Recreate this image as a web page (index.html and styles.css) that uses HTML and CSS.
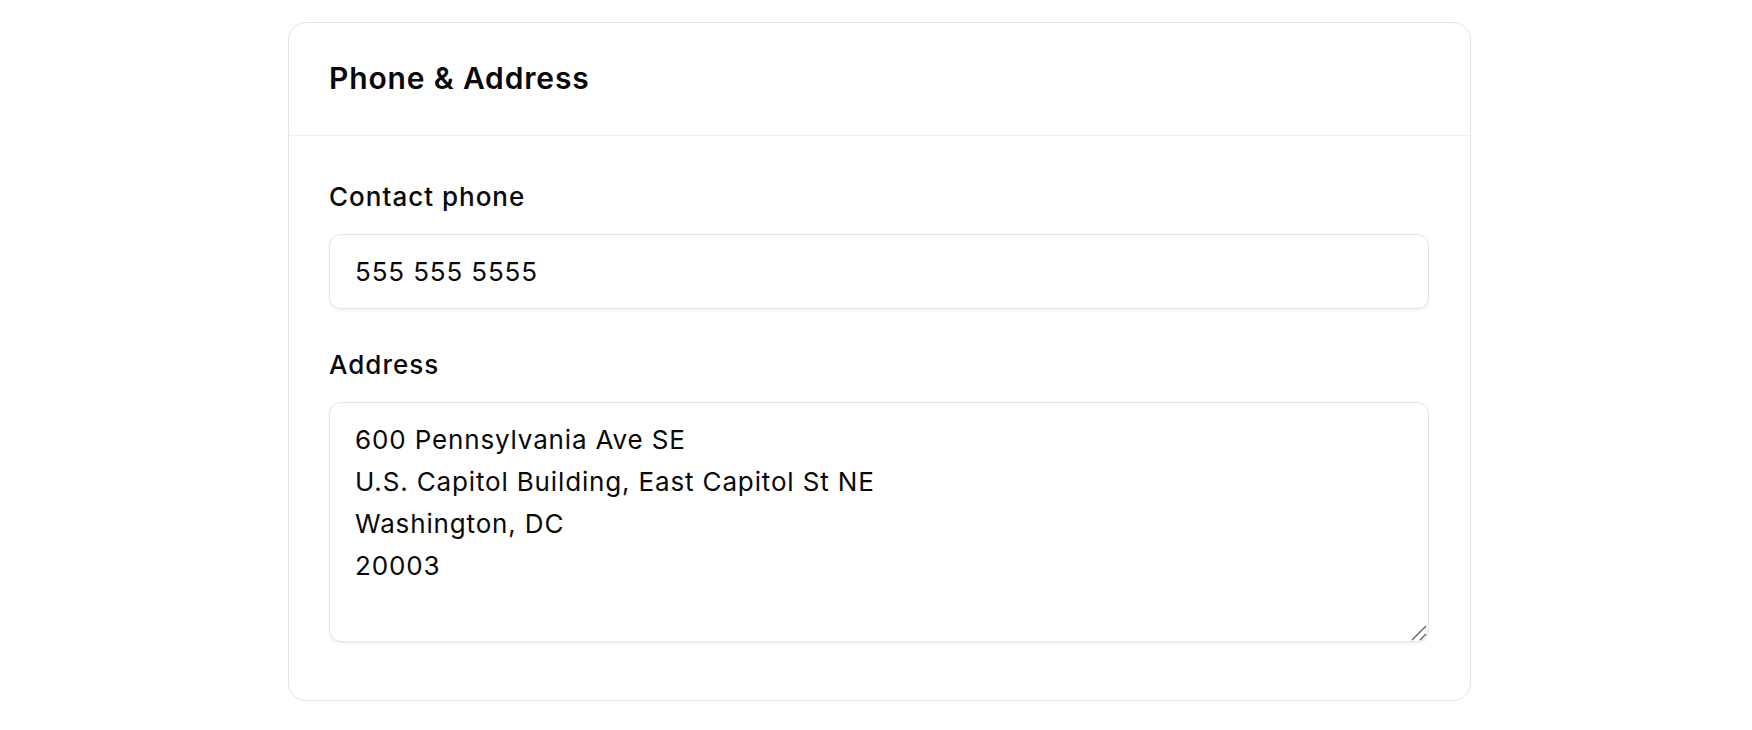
FILE: index.html
```html
<!DOCTYPE html>
<html lang="en">
<head>
<meta charset="utf-8">
<title>Phone &amp; Address</title>
<link rel="stylesheet" href="styles.css">
</head>
<body>
<main class="page">
  <section class="card">
    <header class="card-header">
      <h2 class="card-title">Phone &amp; Address</h2>
    </header>
    <div class="card-body">
      <div class="field">
        <label class="field-label" for="phone">Contact phone</label>
        <input class="field-input" id="phone" type="text" value="555 555 5555">
      </div>
      <div class="field">
        <label class="field-label" for="address">Address</label>
        <div class="textarea-wrap">
          <textarea class="field-textarea" id="address">600 Pennsylvania Ave SE
U.S. Capitol Building, East Capitol St NE
Washington, DC
20003</textarea>
          <svg class="resize-grip" width="18" height="18" viewBox="0 0 18 18" aria-hidden="true">
            <path d="M2 16 L16 2 M10 16 L16 10" stroke="#6b6b6b" stroke-width="1.5" fill="none"/>
          </svg>
        </div>
      </div>
    </div>
  </section>
</main>
</body>
</html>
```
FILE: styles.css
```css
* { box-sizing: border-box; }
html, body { margin: 0; padding: 0; background: #ffffff; }
body {
  font-family: Inter, "Noto Sans", "Liberation Sans", sans-serif;
  color: #09090b;
}
.page {
  padding: 22px 0 0 288px;
}
.card {
  width: 1183px;
  background: #ffffff;
  border: 1px solid #e4e4e7;
  border-radius: 18px;
}
.card-header {
  padding: 35px 40px 37px;
  border-bottom: 1px solid #f0f0f2;
}
.card-title {
  margin: 0;
  font-size: 30px;
  line-height: 40px;
  font-weight: 600;
  letter-spacing: 0.85px;
}
.card-body {
  padding: 41px 41px 58px 40px;
  display: flex;
  flex-direction: column;
  gap: 36px;
}
.field {
  display: flex;
  flex-direction: column;
  gap: 17px;
}
.field-label {
  font-size: 26px;
  line-height: 40px;
  font-weight: 500;
  letter-spacing: 1px;
}
.field-input,
.field-textarea {
  width: 100%;
  font-family: inherit;
  font-size: 26px;
  letter-spacing: 0.85px;
  color: #09090b;
  background: #ffffff;
  border: 1px solid #e4e4e7;
  border-radius: 12px;
  box-shadow: 0 1.5px 3px rgba(0, 0, 0, 0.06);
  outline: none;
  margin: 0;
}
.field-input {
  height: 75px;
  padding: 18px 25px;
  line-height: 37px;
}
.textarea-wrap {
  position: relative;
}
.field-textarea {
  height: 240px;
  padding: 16px 25px;
  line-height: 42px;
  resize: none;
  display: block;
}
.resize-grip {
  position: absolute;
  right: 1px;
  bottom: 0;
  pointer-events: none;
}
```
